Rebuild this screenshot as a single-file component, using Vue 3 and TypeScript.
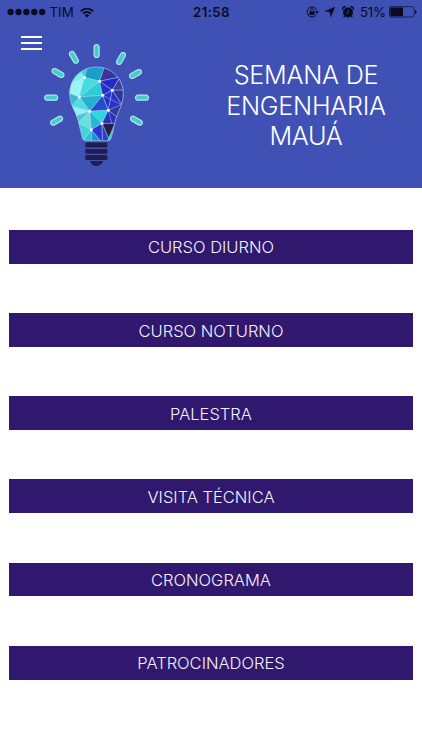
<script setup lang="ts">
interface Ray {
  x: number
  y: number
  angle: number
}

const entries: string[] = [
  'CURSO DIURNO',
  'CURSO NOTURNO',
  'PALESTRA',
  'VISITA TÉCNICA',
  'CRONOGRAMA',
  'PATROCINADORES',
]

const rays: Ray[] = [
  { x: 96.6, y: 51, angle: 0 },
  { x: 73.9, y: 57.3, angle: -30 },
  { x: 121, y: 58.5, angle: 30 },
  { x: 58, y: 73, angle: -60 },
  { x: 135.5, y: 74, angle: 60 },
  { x: 51.2, y: 97.7, angle: 90 },
  { x: 142, y: 97.7, angle: 90 },
  { x: 56.6, y: 120.7, angle: 60 },
  { x: 136.4, y: 120.7, angle: -60 },
]

const nodes: [number, number][] = [
  [84.5, 77.5], [99.6, 81.3], [112.3, 90.3], [102.7, 95.3], [79.3, 97],
  [89.7, 111.3], [108.3, 110.3], [102, 123.4], [91.2, 129.8],
]

const glass =
  'M96.5 67C111.8 67 123.3 79 123.3 93.5C123.3 102 120.3 108 117.9 113.5C115.6 119 114.2 125 113 131L111.2 138Q110.4 140.8 107.6 140.8H86Q83.2 140.8 82.4 138L80.4 130C79.2 124 77.8 119 75.6 113.5C73 107.5 69.7 102 69.7 93.5C69.7 79 81.2 67 96.5 67Z'
</script>

<template>
  <div class="screen">
    <header class="hero">
      <div class="status">
        <div class="side">
          <svg class="dots" width="39" height="8" viewBox="0 0 39 8">
            <circle v-for="n in 5" :key="n" :cx="3.6 + (n - 1) * 7.9" cy="4" r="3.15" />
          </svg>
          <span class="carrier">TIM</span>
          <svg class="wifi" width="14" height="11" viewBox="0 0 14 11">
            <path d="M.7 4.3C4.4.6 9.6.6 13.3 4.3M3 6.7C5.3 4.4 8.7 4.4 11 6.7" fill="none" stroke="#090b22" stroke-width="1.8" />
            <path d="M7 10.6 4.6 8.3Q7 6.4 9.4 8.3Z" />
          </svg>
        </div>
        <span class="time">21:58</span>
        <div class="side right">
          <svg width="13" height="12" viewBox="0 0 13 12">
            <path d="M10.7 4.2A5 5 0 1 0 10.2 8.7" fill="none" stroke="#090b22" stroke-width="1" />
            <path d="M9 5.2h4L11 7.9z" />
            <rect x="3.4" y="5.2" width="5.2" height="3.8" rx=".4" />
            <path d="M4.5 5.5V4a1.5 1.5 0 0 1 3 0v1.5" fill="none" stroke="#090b22" stroke-width=".9" />
          </svg>
          <svg class="arrow" width="10" height="10" viewBox="0 0 10 10">
            <path d="M10 0 5.8 10 4.9 5.1 0 4.2z" stroke="#090b22" stroke-width=".3" />
          </svg>
          <svg class="alarm" width="12" height="12" viewBox="0 0 12 12">
            <circle cx="6" cy="6.5" r="5" />
            <path d="M1 3.6A1.9 1.9 0 0 1 3.6 1.1M8.4 1.1a1.9 1.9 0 0 1 2.6 2.5M2.6 10.2l-.8 1M9.4 10.2l.8 1" fill="none" stroke="#090b22" stroke-width="1.5" />
            <path d="M6.2 3.9V6.8L4.3 7.6" fill="none" stroke="#4051b5" stroke-width=".8" />
          </svg>
          <span class="percent">51%</span>
          <svg class="battery" width="28" height="12" viewBox="0 0 28 12">
            <rect x=".5" y=".7" width="24.5" height="10.4" rx="1.8" fill="none" stroke="#090b22" stroke-width=".7" />
            <rect x="1.3" y="1.5" width="12.7" height="8.8" rx=".7" />
            <path d="M26 3.9q1.6.5 1.6 2T26 7.9z" />
          </svg>
        </div>
      </div>

      <div class="banner">
        <button class="burger" aria-label="Menu"><i></i><i></i><i></i></button>
        <svg class="bulb" width="112" height="130" viewBox="40 40 112 130">
          <defs>
            <clipPath id="glass">
              <path :d="glass" />
            </clipPath>
          </defs>
          <g v-for="(ray, i) in rays" :key="i" :transform="`translate(${ray.x} ${ray.y}) rotate(${ray.angle})`">
            <rect x="-2.5" y="-6.5" width="5" height="13" rx="2.5" fill="#43cbd0" stroke="#b4e7ef" stroke-width="1.2" />
          </g>
          <g clip-path="url(#glass)">
            <rect x="68" y="65" width="57" height="78" fill="#35ced8" />
            <g stroke="#b9e3f3" stroke-width=".4" stroke-linejoin="round">
              <path d="M66 95 72 80 84.5 77.5 79.3 97z" fill="#9cf4f7" />
              <path d="M66 86 80 68 84.5 77.5z" fill="#7deef0" />
              <path d="M78 66 90 65 84.5 77.5z" fill="#42ced8" />
              <path d="M84.5 77.5 88 65 105 65 99.6 81.3z" fill="#1a9fc8" />
              <path d="M84.5 77.5 99.6 81.3 79.3 97z" fill="#43dce0" />
              <path d="M79.3 97 99.6 81.3 102.7 95.3z" fill="#31cbd6" />
              <path d="M79.3 97 102.7 95.3 89.7 111.3z" fill="#22b4ce" />
              <path d="M66 92 79.3 97 73 110z" fill="#36b7d2" />
              <path d="M79.3 97 89.7 111.3 71 106z" fill="#52dbe2" />
              <path d="M71 106 89.7 111.3 76 116z" fill="#98edf0" />
              <path d="M76 116 89.7 111.3 78 123z" fill="#45c9d6" />
              <path d="M89.7 111.3 102.7 95.3 108.3 110.3z" fill="#2a4ccc" />
              <path d="M89.7 111.3 108.3 110.3 102 123.4z" fill="#30d5df" />
              <path d="M89.7 111.3 102 123.4 91.2 129.8z" fill="#25b5d8" />
              <path d="M78 123 89.7 111.3 91.2 129.8z" fill="#69dfe2" />
              <path d="M78 123 91.2 129.8 82 143z" fill="#3fd3dc" />
              <path d="M82 143 91.2 129.8 92 143z" fill="#2fc2d4" />
              <path d="M105 65 99.6 81.3 120 77z" fill="#37359b" />
              <path d="M99.6 81.3 120 77 112.3 90.3z" fill="#2528c9" />
              <path d="M99.6 81.3 112.3 90.3 102.7 95.3z" fill="#2a2fc0" />
              <path d="M120 77 126 90 112.3 90.3z" fill="#403b9f" />
              <path d="M112.3 90.3 126 90 122 105z" fill="#35349b" />
              <path d="M102.7 95.3 112.3 90.3 108.3 110.3z" fill="#2632cb" />
              <path d="M112.3 90.3 122 105 108.3 110.3z" fill="#2930c8" />
              <path d="M108.3 110.3 124 103 117 117z" fill="#383795" />
              <path d="M108.3 110.3 117 117 115 124 102 123.4z" fill="#2a31bb" />
              <path d="M91.2 129.8 102 123.4 102.5 143z" fill="#2937cf" />
              <path d="M91.2 129.8 102.5 143 92 143z" fill="#278fd0" />
              <path d="M102 123.4 115 123.4 108.5 138z" fill="#241d46" />
              <path d="M102 123.4 108.5 138 107 143 102.5 143z" fill="#3340bd" />
            </g>
            <path d="M108.3 110.3 112 124M102.7 95.3 122 105" fill="none" stroke="#b9e3f3" stroke-width=".4" />
            <circle v-for="(node, i) in nodes" :key="i" :cx="node[0]" :cy="node[1]" r="1.5" fill="#fff" />
          </g>
          <path :d="glass" fill="none" stroke="#a9bce6" stroke-width=".7" />
          <g fill="#231d49">
            <rect x="85.3" y="142.6" width="22.1" height="4.8" rx="1" />
            <rect x="85.3" y="148.9" width="22.1" height="4.8" rx="1" />
            <rect x="85.3" y="155.1" width="22.1" height="4.8" rx="1" />
            <path d="M89.7 161H103.3Q101 166 96.5 166T89.7 161Z" />
          </g>
        </svg>
        <h1 class="title">
          <span>SEMANA DE</span>
          <span>ENGENHARIA</span>
          <span>MAUÁ</span>
        </h1>
      </div>
    </header>

    <nav class="menu">
      <button v-for="entry in entries" :key="entry" class="entry">{{ entry }}</button>
    </nav>
  </div>
</template>

<style>
body {
  background: #fff;
}
</style>

<style scoped>
.screen {
  width: 422px;
  height: 750px;
  overflow: hidden;
  background: #fff;
  font-family: Inter, 'Liberation Sans', sans-serif;
}
button {
  border: 0;
  padding: 0;
  margin: 0;
  font: inherit;
}
.hero {
  height: 187.6px;
  background: #4051b5;
}
.status {
  height: 24px;
  display: grid;
  grid-template-columns: 1fr auto 1fr;
  align-items: center;
  padding: 0 5.5px 0 6.5px;
  box-sizing: border-box;
  color: #090b22;
  fill: #090b22;
  line-height: 24px;
}
.side {
  display: flex;
  align-items: center;
}
.right {
  justify-content: flex-end;
}
.carrier {
  margin-left: 4px;
  font-size: 13.3px;
  width: 23px;
  white-space: nowrap;
}
.wifi {
  margin-left: 7px;
}
.time {
  font-size: 13.3px;
  font-weight: 600;
  letter-spacing: 0.4px;
}
.arrow {
  margin-left: 6.5px;
}
.alarm {
  margin-left: 6.5px;
}
.percent {
  margin-left: 6.5px;
  width: 25.5px;
  font-size: 13.3px;
  letter-spacing: -0.3px;
  white-space: nowrap;
}
.battery {
  margin-left: 3px;
}
.banner {
  display: flex;
  align-items: flex-start;
}
.burger {
  margin: 12px 0 0 21px;
  width: 21px;
  display: flex;
  flex-direction: column;
  gap: 3.7px;
  background: none;
}
.burger i {
  height: 2.2px;
  background: #fff;
}
.bulb {
  margin: 16px 0 0 -2px;
  flex: none;
}
.title {
  margin: 36px 0 0 54px;
  width: 200px;
  display: flex;
  flex-direction: column;
  align-items: center;
  font-size: 25.2px;
  font-weight: 300;
  line-height: 30.7px;
  letter-spacing: -0.25px;
  color: #fff;
  white-space: nowrap;
}
.menu {
  display: flex;
  flex-direction: column;
  gap: 49.4px;
  padding: 42.2px 9.2px 0;
}
.entry {
  height: 33.8px;
  box-sizing: border-box;
  padding-top: 1.6px;
  display: flex;
  align-items: center;
  justify-content: center;
  background: #30186e;
  color: #f4f1fb;
  font-size: 16.5px;
  font-weight: 300;
  line-height: 32px;
}
</style>
